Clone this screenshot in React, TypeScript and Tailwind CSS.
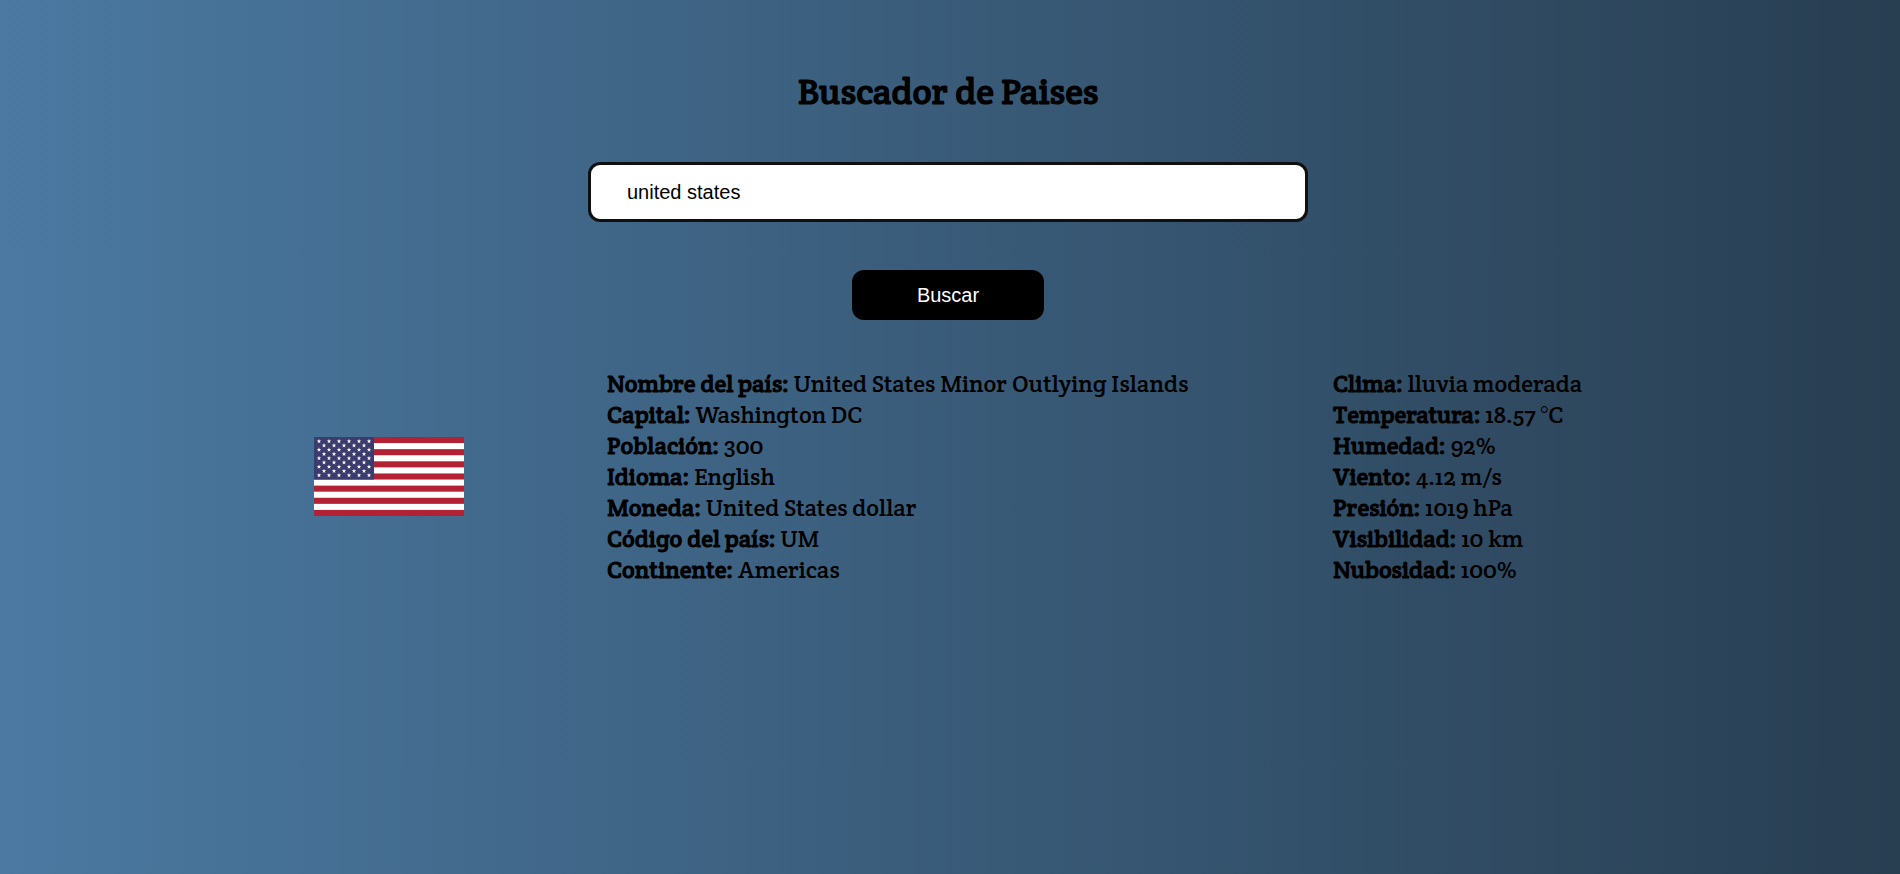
import { useState } from 'react';
import type { FormEvent } from 'react';

type Fact = { label: string; value: string };

const countryFacts: Fact[] = [
  { label: 'Nombre del país:', value: 'United States Minor Outlying Islands' },
  { label: 'Capital:', value: 'Washington DC' },
  { label: 'Población:', value: '300' },
  { label: 'Idioma:', value: 'English' },
  { label: 'Moneda:', value: 'United States dollar' },
  { label: 'Código del país:', value: 'UM' },
  { label: 'Continente:', value: 'Americas' },
];

const weatherFacts: Fact[] = [
  { label: 'Clima:', value: 'lluvia moderada' },
  { label: 'Temperatura:', value: '18.57 °C' },
  { label: 'Humedad:', value: '92%' },
  { label: 'Viento:', value: '4.12 m/s' },
  { label: 'Presión:', value: '1019 hPa' },
  { label: 'Visibilidad:', value: '10 km' },
  { label: 'Nubosidad:', value: '100%' },
];

// Five-pointed star around a centre, as a polygon point list.
function starPoints(cx: number, cy: number, r: number) {
  return Array.from({ length: 10 }, (_, i) => {
    const radius = i % 2 === 0 ? r : r * 0.382;
    const angle = (Math.PI / 5) * i - Math.PI / 2;
    return `${(cx + radius * Math.cos(angle)).toFixed(2)},${(cy + radius * Math.sin(angle)).toFixed(2)}`;
  }).join(' ');
}

function Flag() {
  const stripe = 79 / 13;
  const cantonHeight = stripe * 7;
  const stars: string[] = [];
  for (let row = 0; row < 9; row++) {
    const count = row % 2 === 0 ? 6 : 5;
    for (let col = 0; col < count; col++) {
      const x = (row % 2 === 0 ? 5 : 10) + col * 10;
      stars.push(starPoints(x, ((row + 1) * cantonHeight) / 10, 2.4));
    }
  }
  return (
    <svg viewBox="0 0 150 79" className="w-[150px]" role="img" aria-label="Bandera">
      <rect width="150" height="79" fill="#fff" />
      {Array.from({ length: 7 }, (_, i) => (
        <rect key={i} y={i * 2 * stripe} width="150" height={stripe} fill="#b22234" />
      ))}
      <rect width="60" height={cantonHeight} fill="#3c3b6e" />
      {stars.map((points) => (
        <polygon key={points} points={points} fill="#fff" />
      ))}
    </svg>
  );
}

function FactList({ facts }: { facts: Fact[] }) {
  return (
    <ul className="text-[24px] leading-[31px]">
      {facts.map(({ label, value }) => (
        <li key={label} className="whitespace-nowrap">
          <strong>{label}</strong> {value}
        </li>
      ))}
    </ul>
  );
}

export default function App() {
  const [query, setQuery] = useState('united states');
  const onSubmit = (event: FormEvent) => event.preventDefault();

  return (
    <div className="min-h-screen bg-linear-to-r/srgb from-[#4b79a1] to-[#283e51] pt-17 pr-1 font-['Crete_Round','Liberation_Serif',serif] text-black">
      <h1 className="text-center text-[36px] leading-[46px] font-bold">Buscador de Paises</h1>
      <form onSubmit={onSubmit} className="mt-12 flex flex-col items-center gap-12">
        <input
          type="text"
          aria-label="País"
          value={query}
          onChange={(event) => setQuery(event.target.value)}
          className="h-[60px] w-full max-w-[720px] rounded-[12px] border-3 border-[#101010] bg-white px-9 font-['Liberation_Sans',sans-serif] text-[20px] outline-none"
        />
        <button
          type="submit"
          className="h-[50px] w-48 rounded-[12px] bg-black font-['Liberation_Sans',sans-serif] text-[20px] text-white"
        >
          Buscar
        </button>
      </form>
      <section className="mt-12 grid grid-cols-[150px_583px_249px] items-center justify-center gap-x-[143px]">
        <Flag />
        <FactList facts={countryFacts} />
        <FactList facts={weatherFacts} />
      </section>
    </div>
  );
}
